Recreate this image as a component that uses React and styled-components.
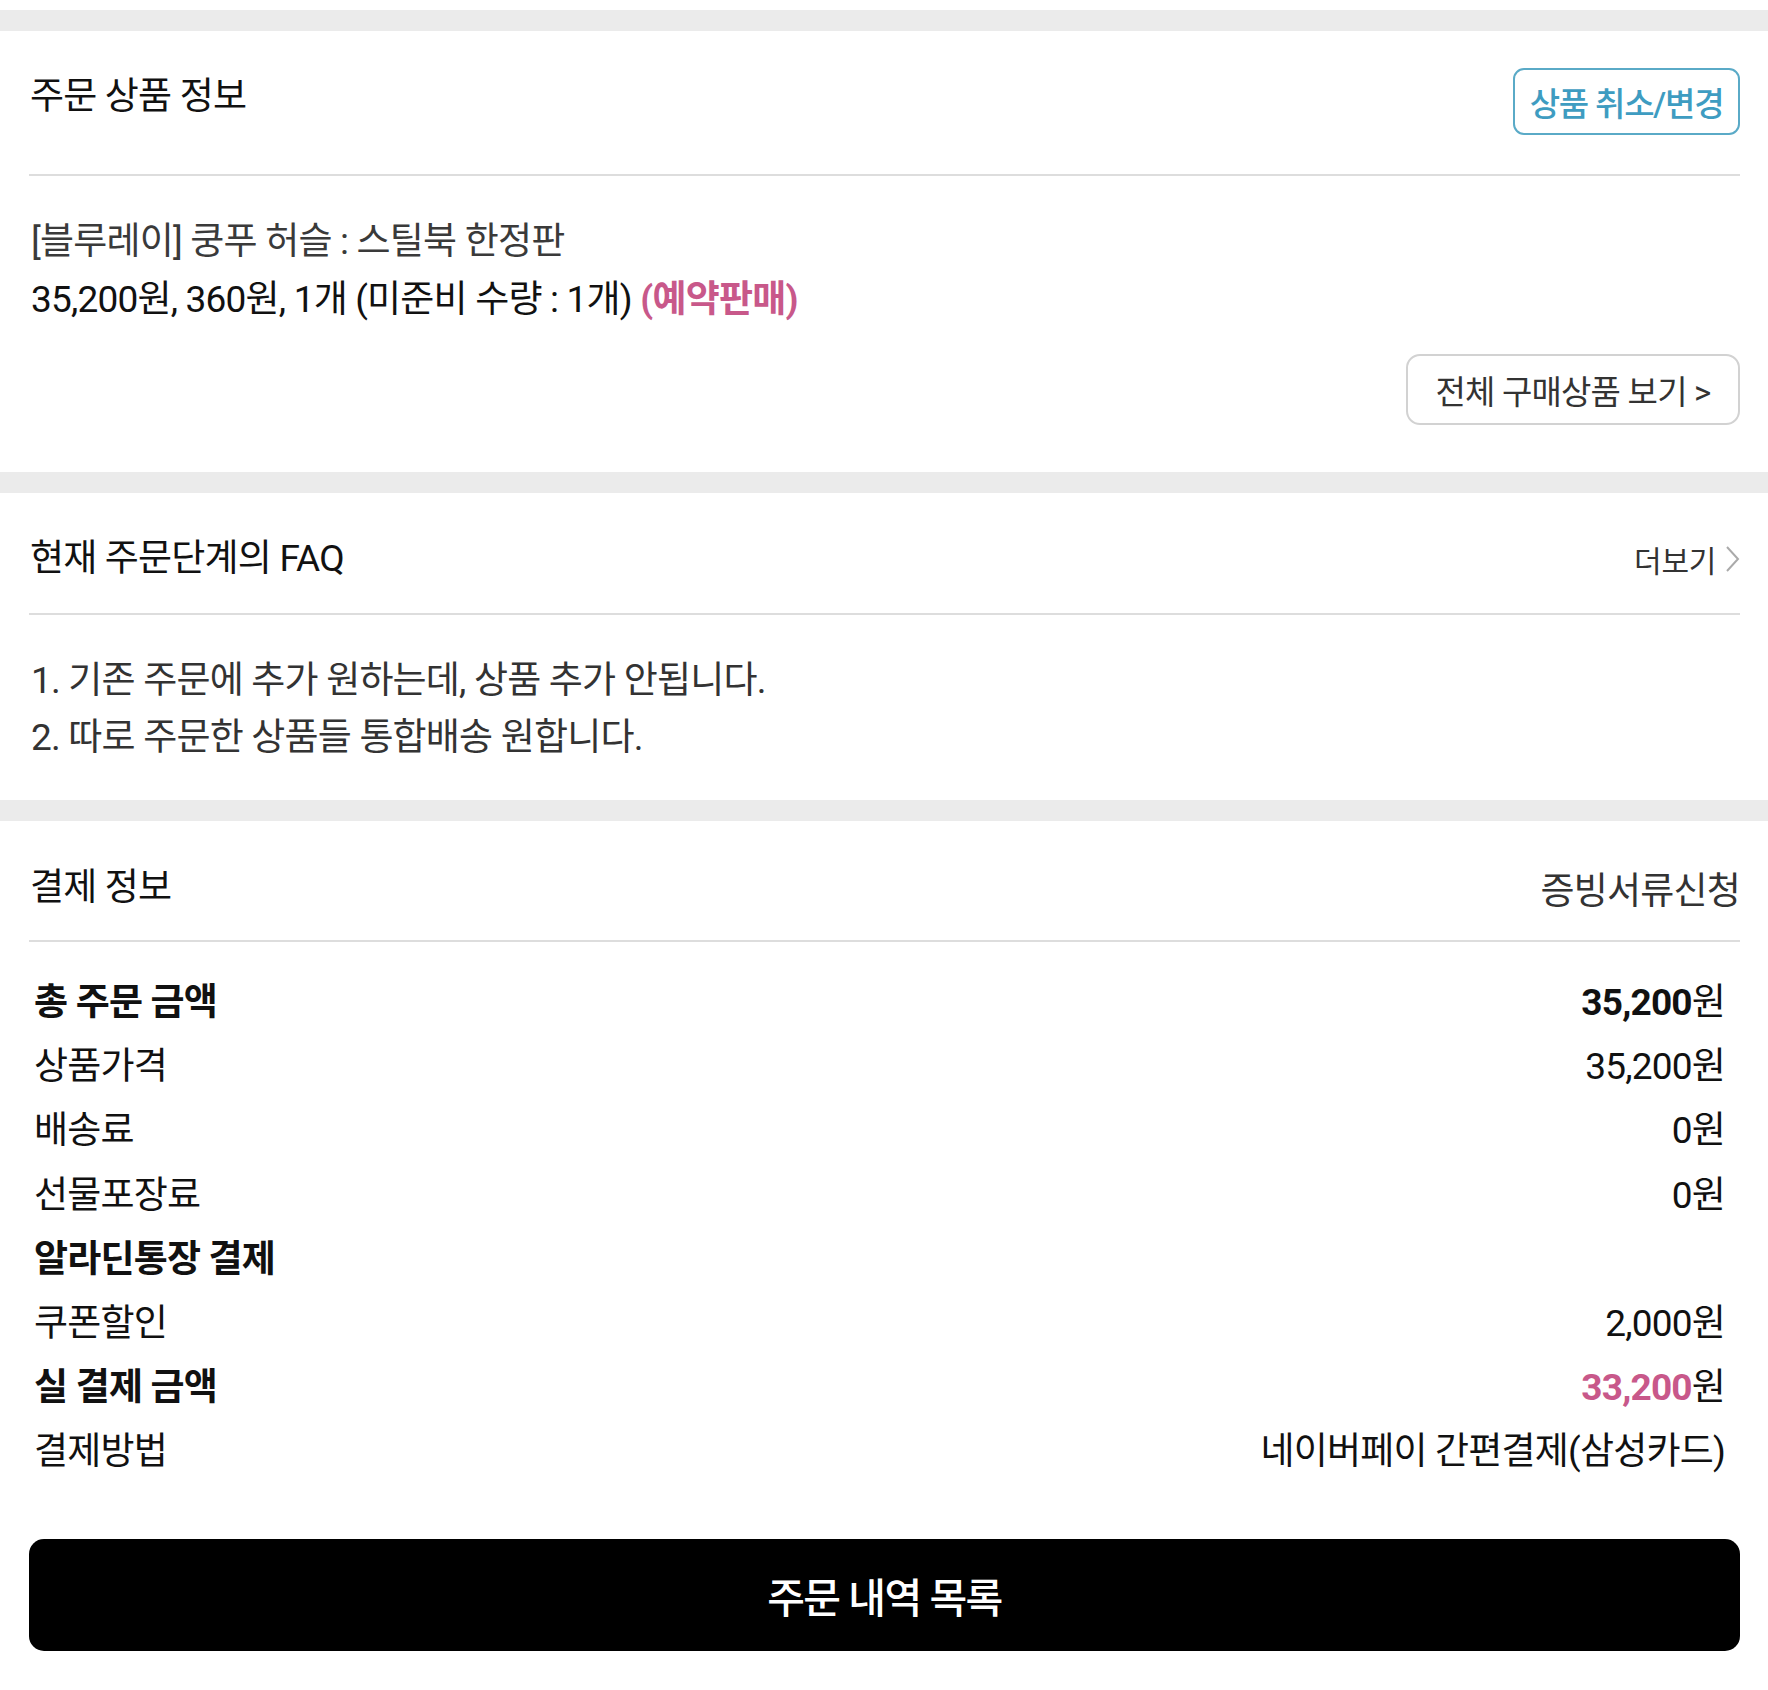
import styled, { createGlobalStyle } from 'styled-components';

const GlobalStyle = createGlobalStyle`
  body {
    margin: 0;
    background: #fff;
    font-family: Roboto, "Noto Sans CJK KR", sans-serif;
    color: #111;
  }
`;

const Page = styled.div`
  padding-top: 10px;
`;

const Band = styled.div`
  height: 21px;
  background: #ebebeb;
`;

const Section = styled.section`
  padding: 0 28px 0 29px;
`;

const Header = styled.div`
  box-sizing: border-box;
  display: flex;
  justify-content: space-between;
  align-items: ${p => p.$align || 'center'};
  height: ${p => p.$h}px;
  padding-top: ${p => p.$pt || 0}px;
  border-bottom: 2px solid #ddd;
`;

const Title = styled.h2`
  margin: ${p => p.$mt || 0}px 0 0 1px;
  font-size: 37px;
  font-weight: 400;
  letter-spacing: -0.8px;
  line-height: 40px;
  color: #111;
`;

const Body = styled.div`
  padding: ${p => p.$pt}px 0 ${p => p.$pb}px 2px;
`;

const TextLine = styled.p`
  margin: 0;
  font-size: 37px;
  letter-spacing: -0.8px;
  line-height: ${p => p.$lh || 58}px;
  color: ${p => p.$color || '#111'};
`;

const Pink = styled.span`
  color: #c8588a;
  font-weight: 700;
`;

const OutlineButton = styled.button`
  box-sizing: border-box;
  width: 227px;
  height: 67px;
  border: 2px solid #5aaac7;
  border-radius: 11px;
  background: #fff;
  color: #3e9cc1;
  font-family: inherit;
  font-size: 33px;
  font-weight: 500;
  letter-spacing: -1.2px;
`;

const ButtonRow = styled.div`
  display: flex;
  justify-content: flex-end;
  margin-top: 25px;
`;

const GhostButton = styled.button`
  box-sizing: border-box;
  width: 334px;
  height: 71px;
  border: 2px solid #d2d2d2;
  border-radius: 14px;
  background: #fff;
  color: #333;
  font-family: inherit;
  font-size: 33px;
  letter-spacing: -0.8px;
`;

const MoreLink = styled.a`
  display: flex;
  align-items: center;
  gap: 9px;
  color: #333;
  font-size: 30px;
  letter-spacing: -0.3px;
  text-decoration: none;
`;

const SideLink = styled.a`
  color: #333;
  font-size: 37px;
  letter-spacing: -0.8px;
  text-decoration: none;
`;

const Rows = styled.div`
  padding: 25px 15px 0 5px;
`;

const Row = styled.div`
  display: flex;
  justify-content: space-between;
  align-items: center;
  height: 64.2px;
  font-size: 37px;
  letter-spacing: -0.8px;
  color: #111;
  font-weight: ${p => (p.$bold ? 700 : 400)};
`;

const Value = styled.span`
  font-weight: 400;
`;

const Num = styled.span`
  font-weight: ${p => (p.$bold ? 700 : 400)};
  color: ${p => (p.$pink ? '#c8588a' : 'inherit')};
`;

const Footer = styled.div`
  padding: 58px 0 41px;
`;

const PrimaryButton = styled.button`
  display: block;
  width: 100%;
  height: 112px;
  border: 0;
  border-radius: 15px;
  background: #000;
  color: #fff;
  font-family: inherit;
  font-size: 41px;
  font-weight: 500;
  letter-spacing: -1.5px;
`;

const Chevron = () => (
  <svg width="15" height="28" viewBox="0 0 15 28" fill="none">
    <polyline points="2,2 13,14 2,26" stroke="#aaa" strokeWidth="2" />
  </svg>
);

const payRows = [
  { label: '총 주문 금액', num: '35,200', bold: true },
  { label: '상품가격', num: '35,200' },
  { label: '배송료', num: '0' },
  { label: '선물포장료', num: '0' },
  { label: '알라딘통장 결제', bold: true },
  { label: '쿠폰할인', num: '2,000' },
  { label: '실 결제 금액', num: '33,200', bold: true, pink: true },
  { label: '결제방법', text: '네이버페이 간편결제(삼성카드)' },
];

export default function App() {
  return (
    <>
      <GlobalStyle />
      <Page>
        <Band />
        <Section>
          <Header $h={145} $pt={37} $align="flex-start">
            <Title $mt={9}>주문 상품 정보</Title>
            <OutlineButton>상품 취소/변경</OutlineButton>
          </Header>
          <Body $pt={37} $pb={47}>
            <TextLine $color="#3a3a3a">[블루레이] 쿵푸 허슬 : 스틸북 한정판</TextLine>
            <TextLine>
              35,200원, 360원, 1개 (미준비 수량 : 1개) <Pink>(예약판매)</Pink>
            </TextLine>
            <ButtonRow>
              <GhostButton>전체 구매상품 보기 &gt;</GhostButton>
            </ButtonRow>
          </Body>
        </Section>

        <Band />
        <Section>
          <Header $h={122} $pt={12}>
            <Title>현재 주문단계의 FAQ</Title>
            <MoreLink>
              더보기
              <Chevron />
            </MoreLink>
          </Header>
          <Body $pt={37} $pb={34}>
            <TextLine $lh={57} $color="#333">1. 기존 주문에 추가 원하는데, 상품 추가 안됩니다.</TextLine>
            <TextLine $lh={57} $color="#333">2. 따로 주문한 상품들 통합배송 원합니다.</TextLine>
          </Body>
        </Section>

        <Band />
        <Section>
          <Header $h={121} $pt={14}>
            <Title>결제 정보</Title>
            <SideLink>증빙서류신청</SideLink>
          </Header>
          <Rows>
            {payRows.map(r => (
              <Row key={r.label} $bold={r.bold}>
                <span>{r.label}</span>
                {r.num && (
                  <Value>
                    <Num $bold={r.bold} $pink={r.pink}>{r.num}</Num>원
                  </Value>
                )}
                {r.text && <Value>{r.text}</Value>}
              </Row>
            ))}
          </Rows>
          <Footer>
            <PrimaryButton>주문 내역 목록</PrimaryButton>
          </Footer>
        </Section>
      </Page>
    </>
  );
}
